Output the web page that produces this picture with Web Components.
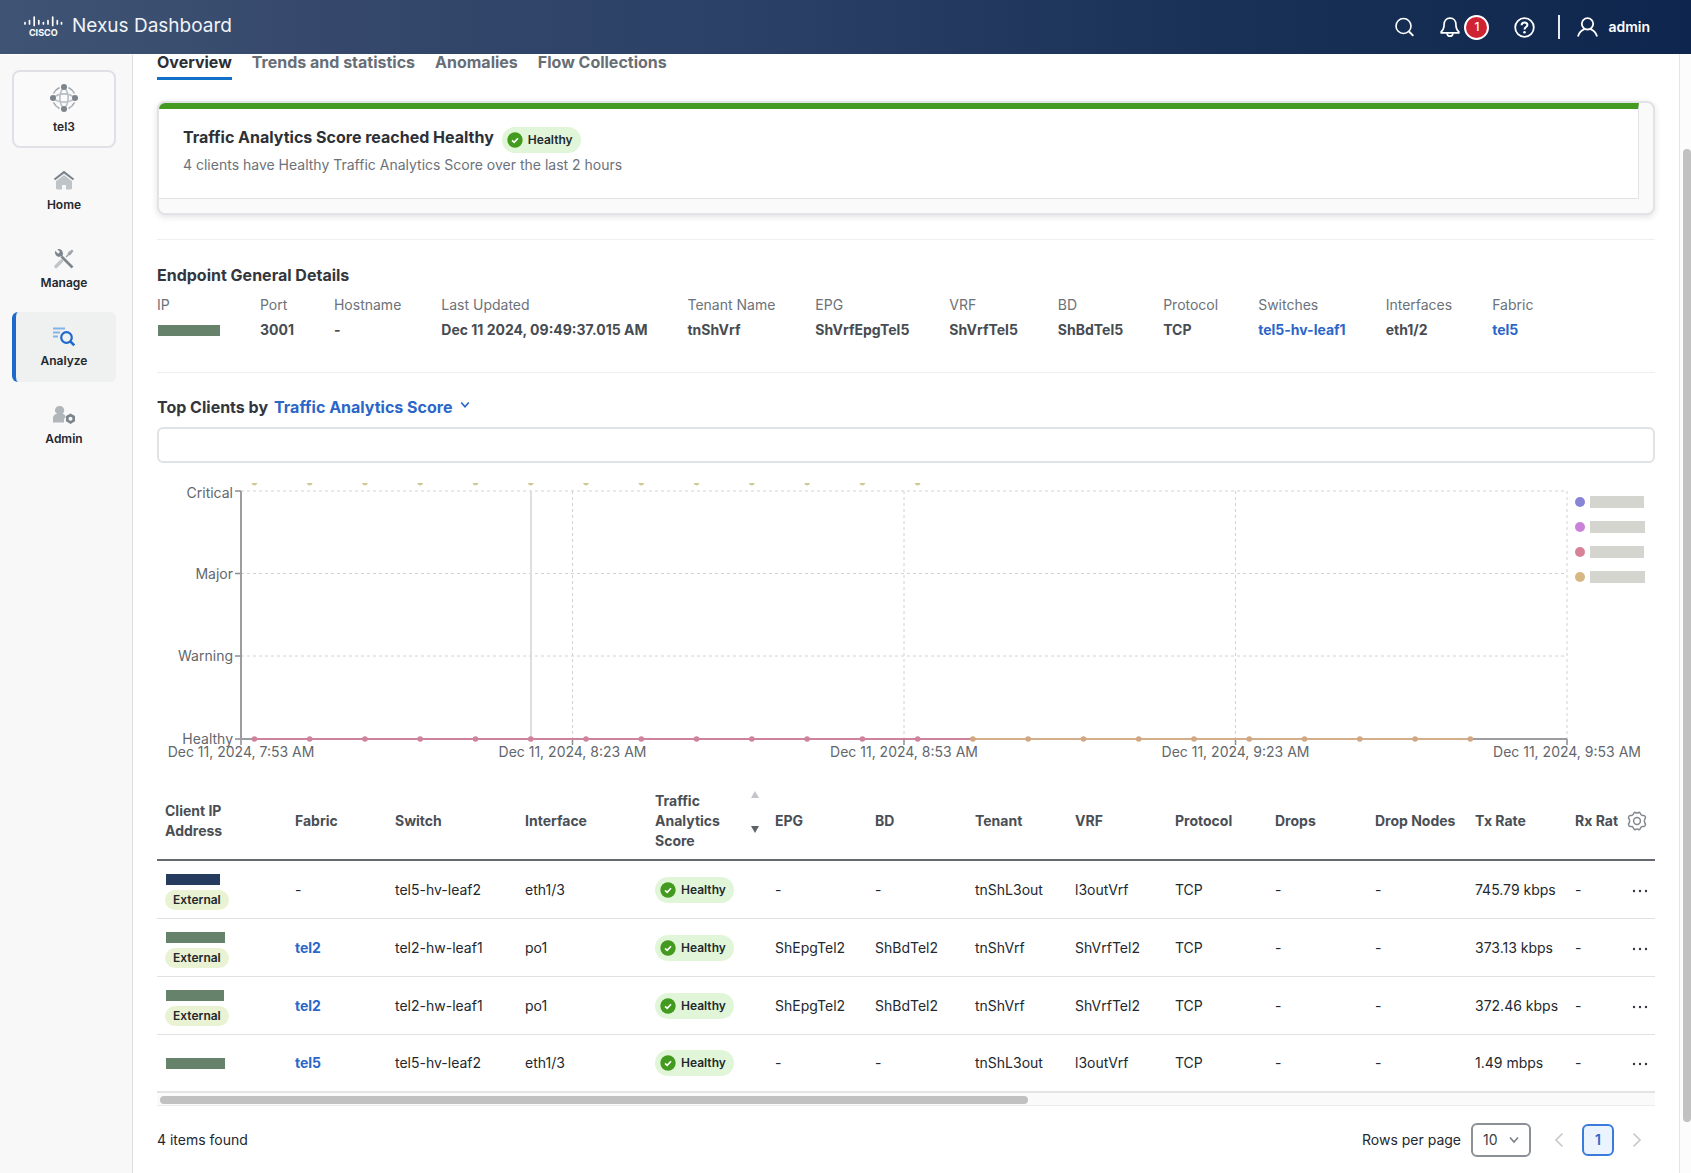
<!DOCTYPE html>
<html lang="en">
<head>
<meta charset="utf-8">
<title>Nexus Dashboard</title>
<style>
html,body{margin:0;height:100%;}
body{font-family:Inter,"Liberation Sans",sans-serif;font-size:14px;line-height:20px;color:#23282e;background:#fff;overflow:hidden;
--blue:#2b66c8;--ink:#33373d;--muted:#6c727a;--line:#dfe1e4;}
</style>
</head>
<body>
<nd-app></nd-app>
<script>
function define(name, css, html, setup) {
  const tpl = document.createElement('template');
  tpl.innerHTML = '<style>*{box-sizing:border-box}' + css + '</style>' + html;
  customElements.define(name, class extends HTMLElement {
    connectedCallback() {
      if (this.shadowRoot) return;
      const root = this.attachShadow({mode: 'open'});
      root.append(tpl.content.cloneNode(true));
      if (setup) setup(root, this);
    }
  });
}

/* Top bar */
define('nd-header', `
:host{display:flex;align-items:center;justify-content:space-between;padding:0 41px 0 23px;color:#fff;
background:linear-gradient(90deg,#3f5475 0%,#36496c 18%,#2a4066 45%,#1a3157 72%,#0e254d 100%)}
.brand{display:flex;align-items:center;gap:9px;font-size:19px;font-weight:400;padding-bottom:3px;color:#f1f3f7}
.tools{display:flex;align-items:center;gap:25px}
button{all:unset;display:flex;align-items:center;cursor:pointer;color:inherit}
.count{display:grid;place-items:center;width:25px;height:25px;border:2px solid #fff;border-radius:50%;background:#cf2233;font-size:12px;font-weight:500;margin-left:4px;box-sizing:border-box}
.user{gap:10px;border-left:2px solid #e6eaf0;height:24px;padding-left:17px;font-weight:600;margin-left:-2px}
`, `
<div class="brand">
<svg width="40" height="22" viewBox="0 0 40 22" fill="none" stroke="#fff" stroke-width="2" stroke-linecap="round" aria-label="Cisco">
<path stroke-width="1.7" d="M2 7.500v1.500M6.500 5.500v3.500M11.200 2v8.500M15.800 5.500v3.500M20.400 7.500v1.500M25 5.500v3.500M29.700 2v8.500M34.300 5.500v3.500M38.500 7.500v1.500"/>
<text x="20.300" y="21" text-anchor="middle" stroke="none" fill="#fff" font-size="9" font-weight="700">CISCO</text></svg>
<span>Nexus Dashboard</span></div>
<div class="tools">
<button aria-label="Search"><svg width="20" height="20" viewBox="0 0 20 20" fill="none" stroke="#fff" stroke-width="1.600"><circle cx="8.500" cy="9" r="7.500"/><path d="M14 14.500l4.300 4.300" stroke-width="1.900"/></svg></button>
<button aria-label="Notifications"><svg width="20" height="21" viewBox="0 0 20 21" fill="none" stroke="#fff" stroke-width="1.700" stroke-linejoin="round"><path d="M10 1.200c-3.800 0-5.900 2.700-5.900 6.100 0 4.300-1.300 6.200-2.900 7.400v1.200h17.600v-1.200c-1.600-1.200-2.900-3.100-2.900-7.400 0-3.400-2.100-6.100-5.900-6.100z"/><path d="M7 16.300c.3 1.800 1.400 2.900 3 2.900s2.700-1.100 3-2.900"/></svg><span class="count">1</span></button>
<button aria-label="Help"><svg width="21" height="21" viewBox="0 0 21 21" fill="none" stroke="#fff" stroke-width="1.800"><circle cx="10.500" cy="10.500" r="9.300"/><path d="M7.600 8.200c0-1.700 1.200-2.800 2.900-2.800s2.900 1 2.900 2.600c0 2-2.900 2.200-2.900 4.500" stroke-width="2"/><circle cx="10.500" cy="15.200" r="1.300" fill="#fff" stroke="none"/></svg></button>
<button class="user"><svg width="21" height="20" viewBox="0 0 21 20" fill="none" stroke="#fff" stroke-width="1.800" stroke-linecap="round"><circle cx="10.500" cy="6.800" r="5.700"/><path d="M1.200 18.800c1.200-3.400 3.600-5.600 6.200-6.600M19.800 18.800c-1.200-3.400-3.600-5.600-6.200-6.600"/></svg><span>admin</span></button>
</div>`);

/* Side navigation */
define('nd-nav-item', `
:host{display:block}
a{display:flex;flex-direction:column;align-items:center;gap:5px;height:70px;padding-top:14px;border-radius:6px;color:#23282e;text-decoration:none;font-size:12px;font-weight:600;line-height:18px}
::slotted(svg){display:block}
:host([site]) a{height:78px;padding-top:12px;gap:6px;border:2px solid #dfe1e6;border-radius:8px;background:#fafafb}
:host([active]) a{background:#eff1f1;border-left:4px solid #1d69cc;padding-right:4px}
`, `<a href="#"><slot name="icon"></slot><slot></slot></a>`);

define('nd-sidebar', `
:host{display:block;background:#f8f8f8;border-right:1px solid #dcdee1;border-top:1px solid #fff;padding:15px 16px 0 12px}
nav{display:flex;flex-direction:column;gap:8px}
`, `<nav>
<nd-nav-item site><svg slot="icon" width="28" height="28" viewBox="0 0 28 28" fill="none" stroke="#b9bec4" stroke-width="1.600"><path d="M14 3c-5.500 6-5.500 16 0 22M14 3c5.500 6 5.500 16 0 22M3 14c6-5.500 16-5.500 22 0M3 14c6 5.500 16 5.500 22 0"/><path d="M3.500 9.500Q5.500 5.500 9.500 3.500M18.500 3.500Q22.500 5.500 24.500 9.500M24.500 18.500Q22.500 22.500 18.500 24.500M9.500 24.500Q5.500 22.500 3.500 18.500" stroke="#a3a9af"/><g fill="#7c848c" stroke="none"><circle cx="14" cy="3" r="3"/><circle cx="14" cy="25" r="3"/><circle cx="3" cy="14" r="3"/><circle cx="25" cy="14" r="3"/></g></svg>tel3</nd-nav-item>
<nd-nav-item><svg slot="icon" width="22" height="21" viewBox="0 0 22 21"><path d="M3 10l8-6 8 6v8q0 1.500-1.500 1.500H13V15h-4v4.500H4.500Q3 19.500 3 18z" fill="#bfc4c9"/><path d="M1.500 9.500L11 2.200l9.500 7.300" fill="none" stroke="#f8f8f8" stroke-width="4.500"/><path d="M1.500 9.500L11 2.200l9.500 7.300" fill="none" stroke="#7c848c" stroke-width="2.200"/></svg>Home</nd-nav-item>
<nd-nav-item><svg slot="icon" width="22" height="21" viewBox="0 0 22 21" fill="none"><path d="M3 18.500L8.500 13" stroke="#bfc4c9" stroke-width="3.400" stroke-linecap="round"/><path d="M12.500 8.500l2-2 .5-2L19 1.500l1.500 1.500-3 4-2 .5-2 2z" fill="#a0a6ac"/><path d="M8.500 8.500L19.500 19.500" stroke="#7c848c" stroke-width="2.600"/><path d="M2.200 2.800l3 3 1.800-1.800-2.600-2.800C8 .3 11 3.500 9.600 7.600 6 10.500 1 8 2.200 2.800z" fill="#7c848c"/></svg>Manage</nd-nav-item>
<nd-nav-item active><svg slot="icon" width="22" height="21" viewBox="0 0 22 21" fill="none"><path d="M0 2.500h12M0 6.500h7M0 10.500h5" stroke="#84b4e6" stroke-width="1.800"/><circle cx="13.500" cy="11.500" r="5.300" stroke="#1d69cc" stroke-width="2.200"/><path d="M17.300 15.300l3.900 4" stroke="#1d69cc" stroke-width="2.600"/></svg>Analyze</nd-nav-item>
<nd-nav-item><svg slot="icon" width="24" height="21" viewBox="0 0 24 21"><path d="M8 2a4.200 4.200 0 0 1 4.200 4.300c0 1.500-.7 2.700-1.500 3.500 1.800.7 2.800 1.700 3 3.200L12 15v3.500H1V14c0-2.300 1.400-3.600 4.200-4.200A4.200 4.200 0 0 1 8 2z" fill="#b1b6bb"/><path d="M18.500 9.500l4.500 2.600v5.200l-4.500 2.600-4.500-2.600v-5.200z" fill="#7c848c"/><circle cx="18.500" cy="14.700" r="2" fill="#f8f8f8"/></svg>Admin</nd-nav-item>
</nav>`);

/* Pills and links */
define('nd-health', `
:host{display:inline-flex;align-items:center;gap:5px;height:26px;padding:0 8px 0 5px;border-radius:13px;background:#e1f6d8;color:#23282e;font-size:12px;font-weight:600;line-height:26px;vertical-align:top}
`, `<svg width="16" height="16" viewBox="0 0 16 16"><circle cx="8" cy="8" r="7.700" fill="#429a1e"/><path d="M5 8.300l2.200 2.100L11 6.200" fill="none" stroke="#fff" stroke-width="1.600"/></svg><slot>Healthy</slot>`);
define('nd-tag', `
:host{display:inline-block;height:20px;padding:0 8px;border-radius:10px;background:#e9f2d3;color:#23282e;font-size:12px;font-weight:600;line-height:20px;vertical-align:top}
`, `<slot></slot>`);
define('nd-link', `a{color:var(--blue);font-weight:700;text-decoration:none}`, `<a href="#"><slot></slot></a>`);
define('nd-mask', `
:host{display:block;width:var(--w,59px);height:11px;margin-left:1px;background:var(--c,#67826a)}`, ``);

/* Tabs */
define('nd-tabs', `
:host{display:flex;gap:20px;font-size:16px;font-weight:700;line-height:16px}
a{color:#686e76;text-decoration:none;padding-bottom:7px;border-bottom:3px solid transparent}
a[aria-current]{color:#2b2f35;border-color:#1170c8}
`, `<a href="#" aria-current="page">Overview</a><a href="#">Trends and statistics</a><a href="#">Anomalies</a><a href="#">Flow Collections</a>`);

/* Score card */
define('nd-score-card', `
:host{display:block;background:#fafafb;border:2px solid #e1e3e6;border-radius:8px;box-shadow:0 2px 6px rgba(40,50,60,.14);overflow:hidden;padding:0 14px 14px 0}
.in{background:#fff;border-top:6px solid #459a22;border-right:1px solid #e1e3e6;border-bottom:1px solid #e1e3e6;height:96px;padding:16px 24px 0}
.row{display:flex;gap:8px;align-items:flex-start}
h2{margin:0;font-size:16px;line-height:24px;font-weight:700;color:#2d3137}
p{margin:0;color:var(--muted);line-height:24px}
.badge{padding-top:2px}
`, `<div class="in"><div class="row"><h2>Traffic Analytics Score reached Healthy</h2><div class="badge"><nd-health></nd-health></div></div>
<p>4 clients have Healthy Traffic Analytics Score over the last 2 hours</p></div>`);

/* Endpoint facts */
define('nd-fact', `
:host{display:flex;flex-direction:column;gap:5px;white-space:nowrap}
.k{color:var(--muted)} .v{font-weight:700;color:#474c52;min-height:20px;display:flex;align-items:center}
`, `<div class="k"></div><div class="v"><slot></slot></div>`, (r, el) => { r.querySelector('.k').textContent = el.getAttribute('label'); });
define('nd-facts', `
:host{display:block}
h2{margin:0 0 10px;font-size:16px;line-height:20px;font-weight:700;color:var(--ink)}
.list{display:flex;gap:40px}
`, `<h2>Endpoint General Details</h2><div class="list">
<nd-fact label="IP"><nd-mask style="--w:62px"></nd-mask></nd-fact>
<nd-fact label="Port">3001</nd-fact><nd-fact label="Hostname">-</nd-fact>
<nd-fact label="Last Updated">Dec 11 2024, 09:49:37.015 AM</nd-fact>
<nd-fact label="Tenant Name">tnShVrf</nd-fact><nd-fact label="EPG">ShVrfEpgTel5</nd-fact>
<nd-fact label="VRF">ShVrfTel5</nd-fact><nd-fact label="BD">ShBdTel5</nd-fact><nd-fact label="Protocol">TCP</nd-fact>
<nd-fact label="Switches"><nd-link>tel5-hv-leaf1</nd-link></nd-fact><nd-fact label="Interfaces">eth1/2</nd-fact>
<nd-fact label="Fabric"><nd-link>tel5</nd-link></nd-fact></div>`);

/* Heading with metric picker, and filter box */
define('nd-filter', `
:host{display:block}
.h{display:flex;align-items:center;gap:6px;font-size:16px;line-height:24px;font-weight:700;color:var(--ink)}
h2{margin:0;font:inherit}
button{all:unset;display:flex;align-items:center;gap:8px;color:var(--blue);cursor:pointer}
button svg{margin-bottom:4px}
input{display:block;width:100%;height:36px;margin:8px 0 0;border:2px solid #dfe3e6;border-radius:6px;background:#fff;font:inherit;padding:0 10px;outline:none}
`, `<div class="h"><h2>Top Clients by</h2><button>Traffic Analytics Score<svg width="10" height="8" viewBox="0 0 10 8" fill="none" stroke="#2b66c8" stroke-width="1.700"><path d="M1.200 1.500L5 5.700l3.800-4.200"/></svg></button></div>
<input type="text" aria-label="Filter clients">`);

/* Time chart */
define('nd-chart', `
:host{display:block}
svg{display:block;width:100%;height:auto}
text{font-size:14px;fill:#63676c}
`, `<svg viewBox="0 0 1498 290"></svg>`, r => {
  const x0 = 84, x1 = 1410, y = [12, 94.500, 177, 260];
  let s = '';
  y.forEach((v, i) => {
    if (i < 3) s += `<path d="M${x0} ${v}H${x1}" stroke="#d0d2d4" stroke-dasharray="3 3"/>`;
    s += `<path d="M78 ${v}H${x0}" stroke="#8a8d91" stroke-width="1.500"/><text x="76" y="${v + (i ? 5 : 7)}" text-anchor="end">${['Critical', 'Major', 'Warning', 'Healthy'][i]}</text>`;
  });
  for (let i = 0; i < 5; i++) {
    const x = x0 + i * 331.5;
    if (i) s += `<path d="M${x} 12V260" stroke="#d0d2d4" stroke-dasharray="3 3"/>`;
    s += `<path d="M${x} 260v6" stroke="#8a8d91" stroke-width="1.500"/><text x="${x}" y="278" text-anchor="middle">Dec 11, 2024, ${['7:53', '8:23', '8:53', '9:23', '9:53'][i]} AM</text>`;
  }
  s += `<path d="M${x0} 12V260H${x1}" fill="none" stroke="#9b9da0" stroke-width="2"/><path d="M374 12V260" stroke="#dedede" stroke-width="2"/>`;
  const dx = k => 97.400 + k * 55.270;
  s += `<path d="M${dx(0)} 260H${dx(13)}" stroke="#cf829b" stroke-width="2"/><path d="M${dx(13)} 260H${dx(22)}" stroke="#d3ae88" stroke-width="2"/>`;
  for (let k = 0; k < 23; k++) s += `<circle cx="${dx(k)}" cy="260" r="2.800" fill="${k < 13 ? '#cf829b' : '#d1a783'}"/>`;
  for (let k = 0; k < 13; k++) s += `<path d="M${dx(k) - 3} 4h6q-1 2.500-3 2.500t-3-2.500z" fill="#cdca96"/>`;
  [['#8884d8', 54], ['#ca82d8', 55], ['#d8829a', 54], ['#d8b882', 55]].forEach(([c, w], i) => {
    s += `<circle cx="1423" cy="${23 + 25 * i}" r="5" fill="${c}"/><rect x="1433" y="${17 + 25 * i}" width="${w}" height="12" fill="#d4d5cf"/>`;
  });
  r.querySelector('svg').innerHTML = s;
});

/* Client table */
define('nd-client-table', `
:host{display:block}
.scroll{overflow:hidden}
table{table-layout:fixed;width:1547px;min-width:calc(100% + 49px);border-collapse:separate;border-spacing:0}
th{height:79px;padding:0 8px;text-align:left;font-size:14px;line-height:20px;font-weight:700;color:#4a4f56;border-bottom:2px solid #66696f;white-space:nowrap}
td{height:58px;padding:0 8px;border-bottom:1px solid #dfe1e3;white-space:nowrap}
td:first-child{padding-top:5px}
th.wrap{white-space:normal}
tr:last-child td{border:0;height:56px}
tr:last-child td:first-child{padding-top:0}
td:last-child,th:last-child{position:sticky;right:0;background:#fff;text-align:center}
.sort{display:flex;justify-content:space-between;align-items:flex-start}
.arrows{display:flex;flex-direction:column;gap:28px}
button{all:unset;cursor:pointer;display:inline-block;vertical-align:middle}
svg{display:block}
nd-tag{margin-top:5px}
th:last-child{padding:0}
td:last-child{padding:0 0 0 6px}
.bar{border-top:2px solid #e2e3e4;border-bottom:1px solid #ebebec;background:#fafafa;height:15px;padding:3px}
.thumb{width:58.200%;height:8px;border-radius:4px;background:#c1c1c1}
`, `<div class="scroll"><table><colgroup></colgroup><thead><tr></tr></thead><tbody></tbody></table></div><div class="bar"><div class="thumb"></div></div>`, r => {
  const cols = [['Client IP Address', 130], ['Fabric', 100], ['Switch', 130], ['Interface', 130], ['Traffic Analytics Score', 120], ['EPG', 100], ['BD', 100], ['Tenant', 100], ['VRF', 100], ['Protocol', 100], ['Drops', 100], ['Drop Nodes', 100], ['Tx Rate', 100], ['Rx Rate', 100], ['', 37]];
  r.querySelector('colgroup').innerHTML = cols.map(c => `<col style="width:${c[1]}px">`).join('');
  const arrows = '<span class="arrows"><svg width="8" height="7"><path d="M4 0l4 7H0z" fill="#c3c5c8"/></svg><svg width="8" height="7"><path d="M4 7l4-7H0z" fill="#5e636a"/></svg></span>';
  const gear = '<button aria-label="Table settings"><svg width="20" height="20" viewBox="0 0 20 20" fill="none" stroke="#85898e" stroke-width="1.500" stroke-linejoin="round"><path d="M7.200 1.700q.5-.6 1.200-.2 1.600 1 3.200 0 .7-.4 1.200.2l1 1.700q.6 1 1.800 1h1.300q.8.100 1.100.8.500 1.100.5 1.700-.1.500-.6.900-1.300 2.200 0 4.400.5.400.6.900 0 .6-.5 1.700-.3.700-1.100.8h-1.300q-1.200 0-1.800 1l-1 1.700q-.5.600-1.200.2-1.600-1-3.200 0-.7.400-1.200-.2l-1-1.700q-.6-1-1.800-1H3.100q-.8-.1-1.100-.8-.5-1.100-.5-1.700.1-.5.600-.9 1.300-2.200 0-4.400-.5-.4-.6-.9 0-.6.5-1.700.3-.7 1.100-.8h1.300q1.200 0 1.800-1z"/><circle cx="10" cy="10" r="3.400"/></svg></button>';
  r.querySelector('thead tr').innerHTML = cols.map(([t], i) => i === 4 ? `<th class="wrap"><div class="sort"><span>Traffic<br>Analytics<br>Score</span>${arrows}</div></th>` : i === 14 ? `<th>${gear}</th>` : `<th${i ? '' : ' class="wrap"'}>${i ? t : 'Client IP<br>Address'}</th>`).join('');
  const more = '<button aria-label="Row actions"><svg width="16" height="4" viewBox="0 0 16 4" fill="#33373d"><circle cx="2" cy="2" r="1.200"/><circle cx="8" cy="2" r="1.200"/><circle cx="14" cy="2" r="1.200"/></svg></button>';
  const rows = [
    [54, '#253c5f', 1, '-', 'tel5-hv-leaf2', 'eth1/3', '-', '-', 'tnShL3out', 'l3outVrf', '745.79 kbps'],
    [59, '#67826a', 1, 'tel2', 'tel2-hw-leaf1', 'po1', 'ShEpgTel2', 'ShBdTel2', 'tnShVrf', 'ShVrfTel2', '373.13 kbps'],
    [58, '#67826a', 1, 'tel2', 'tel2-hw-leaf1', 'po1', 'ShEpgTel2', 'ShBdTel2', 'tnShVrf', 'ShVrfTel2', '372.46 kbps'],
    [59, '#67826a', 0, 'tel5', 'tel5-hv-leaf2', 'eth1/3', '-', '-', 'tnShL3out', 'l3outVrf', '1.49 mbps']];
  r.querySelector('tbody').innerHTML = rows.map(d => '<tr>' + [
    `<nd-mask style="--w:${d[0]}px;--c:${d[1]}"></nd-mask>${d[2] ? '<nd-tag>External</nd-tag>' : ''}`,
    d[3] === '-' ? '-' : `<nd-link>${d[3]}</nd-link>`, d[4], d[5], '<nd-health></nd-health>',
    d[6], d[7], d[8], d[9], 'TCP', '-', '-', d[10], '-', more].map(c => `<td>${c}</td>`).join('') + '</tr>').join('');
});

/* Pager */
define('nd-pager', `
:host{display:flex;align-items:center;justify-content:space-between;height:34px}
.r{display:flex;align-items:center;gap:10px}
.pages{display:flex;align-items:center;gap:16px;margin-left:11px;padding-right:11px}
.sel{position:relative;display:flex}
select{appearance:none;width:60px;height:34px;border:2px solid #8b9096;border-radius:6px;background:#fff;padding:0 0 0 10px;font:inherit;color:#3b4046}
.sel svg{position:absolute;right:12px;top:13px;pointer-events:none}
button{all:unset;cursor:pointer;display:flex}
.cur{box-sizing:border-box;width:32px;height:32px;justify-content:center;align-items:center;border:2px solid #3a7bdc;border-radius:6px;background:#ebf4fe;color:#2b66c8;font-weight:600}
`, `<span>4 items found</span><div class="r"><label for="rows">Rows per page</label>
<span class="sel"><select id="rows"><option>10</option></select><svg width="10" height="8" viewBox="0 0 10 8" fill="none" stroke="#7c8289" stroke-width="1.700"><path d="M1 1.500L5 6l4-4.500"/></svg></span>
<div class="pages"><button aria-label="Previous page"><svg width="14" height="16" viewBox="0 0 14 16" fill="none" stroke="#c6c9cc" stroke-width="1.700"><path d="M10.500 1.500L4 8l6.500 6.500"/></svg></button><button class="cur">1</button><button aria-label="Next page"><svg width="14" height="16" viewBox="0 0 14 16" fill="none" stroke="#c6c9cc" stroke-width="1.700"><path d="M3.500 1.500L10 8l-6.500 6.500"/></svg></button></div></div>`);

/* Page */
define('nd-app', `
:host{display:grid;grid-template:54px minmax(0,1fr)/133px minmax(0,1fr) 12px;height:100vh}
nd-header{grid-column:1/-1}
main{padding:0 24px}
hr{border:0;border-top:1px solid #eeeff1;margin:0}
nd-tabs{margin-bottom:21px}
nd-score-card{margin-bottom:24px}
nd-facts{padding:25px 0 32px}
nd-filter{padding:22px 0 16px}
nd-client-table{margin:13px 0 17px}
.track{border-left:1px solid #e4e5e7;background:#fcfcfc;display:grid;grid-template-rows:95fr 973fr 51fr;padding-left:3px}
.track i{grid-row:2;background:#c1c1c1;border-radius:4px}
`, `<nd-header></nd-header><nd-sidebar></nd-sidebar>
<main><nd-tabs></nd-tabs><nd-score-card></nd-score-card><hr><nd-facts></nd-facts><hr><nd-filter></nd-filter><nd-chart></nd-chart><nd-client-table></nd-client-table><nd-pager></nd-pager></main>
<div class="track"><i></i></div>`);
</script>
</body>
</html>
